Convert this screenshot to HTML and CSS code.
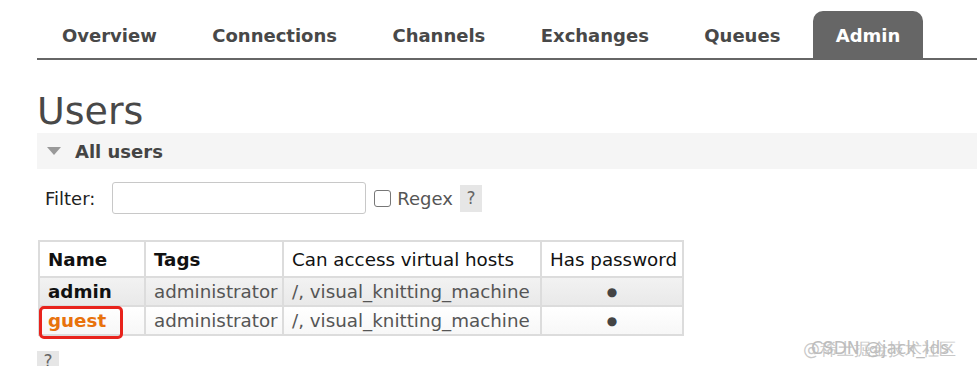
FILE: index.html
```html
<!DOCTYPE html>
<html>
<head>
<meta charset="utf-8">
<link rel="stylesheet" href="styles.css">
</head>
<body>
<div class="page">
  <nav class="tabs">
    <a class="tab">Overview</a>
    <a class="tab">Connections</a>
    <a class="tab">Channels</a>
    <a class="tab">Exchanges</a>
    <a class="tab">Queues</a>
    <a class="tab active">Admin</a>
  </nav>
  <h1 class="title">Users</h1>
  <div class="section-head"><span class="tri"></span><span>All users</span></div>
  <div class="filter">
    <label class="filter-label">Filter:</label>
    <input class="filter-input" type="text">
    <span class="check"></span>
    <span class="regex">Regex</span>
    <span class="help">?</span>
  </div>
  <table class="users">
    <colgroup>
      <col class="c1"><col class="c2"><col class="c3"><col class="c4">
    </colgroup>
    <thead>
      <tr><th class="b">Name</th><th class="b">Tags</th><th>Can access virtual hosts</th><th>Has password</th></tr>
    </thead>
    <tbody>
      <tr class="alt"><td class="name">admin</td><td>administrator</td><td>/, visual_knitting_machine</td><td class="ctr">●</td></tr>
      <tr class="plain"><td class="name guest"><span class="mark">guest</span></td><td>administrator</td><td>/, visual_knitting_machine</td><td class="ctr">●</td></tr>
    </tbody>
  </table>
  <div class="help bottom">?</div>
</div>
<div class="wm"><span class="wm1">@稀土掘金技术社区</span><span class="wm2">CSDN @jack_lds</span></div>
</body>
</html>
```
FILE: styles.css
```css
html, body { margin: 0; padding: 0; background: #fff; }
body { font-family: "DejaVu Sans", Verdana, sans-serif; color: #484848; width: 977px; height: 366px; overflow: hidden; position: relative; }
.page { padding-left: 37px; padding-top: 11px; }
.tabs { display: flex; gap: 9.4px; padding-left: 2px; border-bottom: 2px solid #666; height: 47px; }
.tab { display: flex; align-items: center; padding: 2px 23px 0; font-weight: bold; font-size: 18px; color: #484848; border-radius: 10px 10px 0 0; }
.tab.active { background: #666; color: #fff; }
.title { margin: 29px 0 0 0; font-size: 38px; font-weight: normal; line-height: 44px; color: #484848; }
.section-head { display: flex; align-items: center; height: 36px; background: #f5f5f5; font-weight: bold; font-size: 18px; color: #444; }
.tri { width: 0; height: 0; border-left: 7px solid transparent; border-right: 7px solid transparent; border-top: 8px solid #999; margin: 0 14px 0 10px; }
.filter { display: flex; align-items: center; margin-top: 13px; padding-left: 8px; font-size: 18px; color: #222; }
.filter-label { margin-right: 17px; }
.filter-input { width: 254px; height: 32px; box-sizing: border-box; border: 1px solid #c8c8c8; border-radius: 3px; margin: 0; }
.check { width: 15px; height: 15px; border: 1px solid #777; border-radius: 3px; margin-left: 8px; }
.regex { margin-left: 6px; color: #555; }
.help { display: inline-flex; align-items: center; justify-content: center; width: 22px; height: 27px; background: #e6e6e6; color: #666; font-size: 17px; margin-left: 7px; }
.users { margin-top: 26px; margin-left: 1px; border-collapse: collapse; table-layout: fixed; width: 644px; font-size: 18.3px; }
.c1 { width: 106px; } .c2 { width: 138px; } .c3 { width: 258px; } .c4 { width: 142px; }
.users th, .users td { border: 2px solid #dcdcdc; padding: 0 8px; white-space: nowrap; text-align: left; }
.users th { height: 34px; font-weight: normal; color: #111; background: #fff; }
.users th.b { font-weight: bold; }
.users td { height: 27px; color: #555; }
.users .alt td { background: linear-gradient(#f2f2f2, #e9e9e9); }
.users .plain td { background: linear-gradient(#fff, #f7f7f7); }
.users td.name { font-weight: bold; color: #111; }
.users td.guest { color: #e8720c; position: relative; }
.mark::after { content: ""; position: absolute; left: -1px; top: -1px; width: 78px; height: 27px; border: 3px solid #e8231c; border-radius: 5px; }
.users td.ctr { text-align: center; font-size: 12px; color: #444; }
.bottom { margin: 15px 0 0 0; height: 22px; align-items: flex-start; }
.wm { position: absolute; left: 803px; top: 338px; font-size: 17px; color: #c8c8c8; }
.wm1, .wm2 { position: absolute; left: 0; top: 0; white-space: nowrap; }
.wm2 { left: 8px; color: #bdbdbd; }
```
